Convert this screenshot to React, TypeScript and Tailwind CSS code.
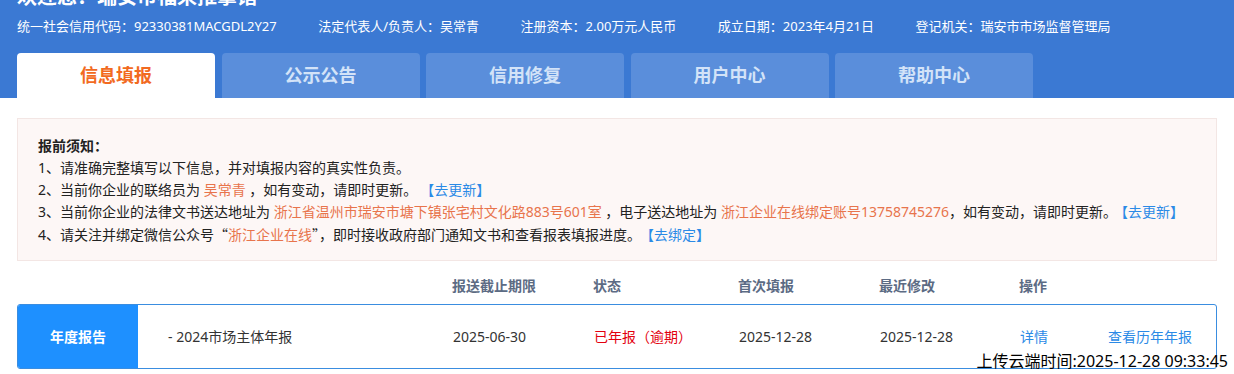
const INFO = [
  '统一社会信用代码：92330381MACGDL2Y27',
  '法定代表人/负责人：吴常青',
  '注册资本：2.00万元人民币',
  '成立日期：2023年4月21日',
  '登记机关：瑞安市市场监督管理局',
];

const TABS = ['信息填报', '公示公告', '信用修复', '用户中心', '帮助中心'];

const COLUMNS = ['报送截止期限', '状态', '首次填报', '最近修改', '操作'];

const GRID = 'grid grid-cols-[120px_315px_141px_145px_141px_140px_88px_1fr] items-center';

function Orange({ children }: { children: React.ReactNode }) {
  return <span className="text-[#e8744c]">{children}</span>;
}

function Link({ children }: { children: React.ReactNode }) {
  return <span className="text-[#2b8ae6]">{children}</span>;
}

export default function App() {
  return (
    <div className="relative min-h-[374px] bg-white font-['Noto_Sans','Noto_Sans_CJK_SC',sans-serif] text-[#333]">
      <header className="h-[98px] overflow-hidden bg-[#3b79d3] pl-[17px]">
        <h1 className="-mt-[17px] h-[28px] text-[20px] font-bold leading-[28px] text-white">
          欢迎您：瑞安市福来推拿馆
        </h1>
        <div className="mt-[5px] flex gap-[41.5px] text-[13px] leading-[20px] text-white">
          {INFO.map((t) => (
            <span key={t}>{t}</span>
          ))}
        </div>
        <nav className="mt-[17px] flex gap-[6.5px]">
          {TABS.map((t, i) => (
            <div
              key={t}
              className={`flex h-[45px] w-[198px] items-center justify-center rounded-t-[4px] text-[18px] font-bold ${
                i === 0 ? 'bg-white text-[#f26a21]' : 'bg-[#5a8edb] text-[#d3e3f8]'
              }`}
            >
              {t}
            </div>
          ))}
        </nav>
      </header>

      <section className="mx-[17px] mt-[20px] w-[1200px] border border-[#f3e6e4] bg-[#fdf7f6] px-[20px] pt-[16px] pb-[14px] text-[14px] leading-[22px] text-[#222]">
        <p className="font-bold">报前须知：</p>
        <p>1、请准确完整填写以下信息，并对填报内容的真实性负责。</p>
        <p>
          2、当前你企业的联络员为 <Orange>吴常青</Orange> ，如有变动，请即时更新。
          <span className="ml-[10px]">
            <Link>【去更新】</Link>
          </span>
        </p>
        <p>
          3、当前你企业的法律文书送达地址为 <Orange>浙江省温州市瑞安市塘下镇张宅村文化路883号601室</Orange> ，电子送达地址为{' '}
          <Orange>浙江企业在线绑定账号13758745276</Orange>，如有变动，请即时更新。
          <span className="ml-[4px]">
            <Link>【去更新】</Link>
          </span>
        </p>
        <p>
          4、请关注并绑定微信公众号<span className="font-['Noto_Sans_CJK_SC',sans-serif]">“</span>
          <Orange>浙江企业在线</Orange>
          <span className="font-['Noto_Sans_CJK_SC',sans-serif]">”</span>，即时接收政府部门通知文书和查看报表填报进度。
          <span className="ml-[6px]">
            <Link>【去绑定】</Link>
          </span>
        </p>
      </section>

      <div className="mx-[17px] mt-[6px] w-[1200px]">
        <div className={`${GRID} h-[37px] text-[14px] font-bold text-[#5c6b84]`}>
          <span />
          <span />
          {COLUMNS.map((c) => (
            <span key={c}>{c}</span>
          ))}
        </div>
        <div className={`${GRID} h-[65px] overflow-hidden rounded-[3px] border border-[#3a8de0] text-[14px] text-[#333]`}>
          <div className="flex h-full items-center justify-center bg-[#1e90ff] font-bold text-white">年度报告</div>
          <span className="pl-[30px]">- 2024市场主体年报</span>
          <span>2025-06-30</span>
          <span className="text-[#e3000e]">已年报（逾期）</span>
          <span>2025-12-28</span>
          <span>2025-12-28</span>
          <span className="text-[#2b8ae6]">详情</span>
          <span className="text-[#2b8ae6]">查看历年年报</span>
        </div>
      </div>

      <div className="absolute top-[350px] right-[6px] text-[16px] leading-[22px] text-black">
        上传云端时间:2025-12-28 09:33:45
      </div>
    </div>
  );
}
